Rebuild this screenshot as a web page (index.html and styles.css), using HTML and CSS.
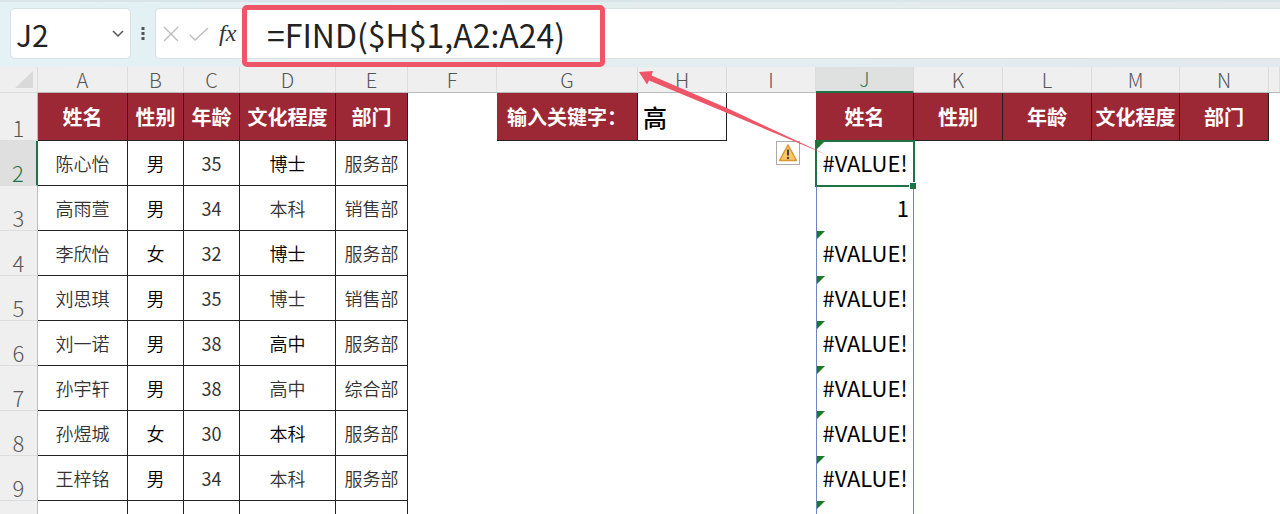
FILE: index.html
```html
<!DOCTYPE html>
<html lang="zh-CN">
<head>
  <meta charset="UTF-8">
  <meta name="viewport" content="width=device-width, initial-scale=1.0">
  <title>FIND</title>
  <link rel="stylesheet" href="styles.css">
</head>
<body>
  <div class="formula-bar">
    <div class="name-box">
      <input class="name-input" type="text" value="J2" aria-label="名称框">
      <button class="name-toggle" aria-label="展开">
        <svg width="14" height="10" viewBox="0 0 14 10"><path d="M2 2l5 5 5-5" fill="none" stroke="#555" stroke-width="1.5"/></svg>
      </button>
    </div>
    <svg class="grip" width="4" height="14" viewBox="0 0 4 14"><path d="M.5 0h3v3h-3zM.5 5h3v3h-3zM.5 10h3v3h-3z" fill="#555"/></svg>
    <div class="formula-tools">
      <button aria-label="取消">
        <svg width="16" height="16" viewBox="0 0 16 16"><path d="M1 1l14 14M15 1L1 15" fill="none" stroke="#bbb" stroke-width="1.3"/></svg>
      </button>
      <button aria-label="输入">
        <svg width="20" height="16" viewBox="0 0 20 16"><path d="M1 9l5 5L19 2" fill="none" stroke="#bbb" stroke-width="1.3"/></svg>
      </button>
      <button class="fx" aria-label="插入函数">fx</button>
    </div>
    <input class="formula-input" type="text" value="=FIND($H$1,A2:A24)" aria-label="编辑栏">
  </div>

  <table class="sheet">
    <colgroup>
      <col class="c-row"><col class="c-a"><col class="c-b"><col class="c-b"><col class="c-d"><col class="c-e">
      <col class="c-std"><col class="c-g"><col class="c-std"><col class="c-std"><col class="c-j">
      <col class="c-std"><col class="c-std"><col class="c-m"><col class="c-std"><col>
    </colgroup>
    <thead>
      <tr>
        <th class="corner"><svg width="20" height="18" viewBox="0 0 20 18"><path d="M19 0v17H1z" fill="#d9d9d9"/></svg></th>
        <th>A</th><th>B</th><th>C</th><th>D</th><th>E</th><th>F</th><th>G</th><th>H</th><th>I</th>
        <th class="active">J</th><th>K</th><th>L</th><th>M</th><th>N</th><th></th>
      </tr>
    </thead>
    <tbody>
      <tr class="row-title">
        <th>1</th>
        <td class="title">姓名</td><td class="title">性别</td><td class="title">年龄</td><td class="title">文化程度</td><td class="title">部门</td>
        <td></td><td class="title">输入关键字：</td><td class="keyword">高</td><td></td>
        <td class="title">姓名</td><td class="title">性别</td><td class="title">年龄</td><td class="title">文化程度</td><td class="title">部门</td><td></td>
      </tr>
      <tr>
        <th class="active">2</th>
        <td class="cell">陈心怡</td><td class="cell dark">男</td><td class="cell num">35</td><td class="cell dark">博士</td><td class="cell">服务部</td>
        <td></td><td></td><td></td>
        <td class="warn-cell">
          <button class="warn" aria-label="错误检查">
            <svg width="20" height="20" viewBox="0 0 20 20"><path d="M10 2L18.500 17.500H1.500z" fill="#fbc568" stroke="#d9982f" stroke-width="1.500" stroke-linejoin="round"/><path d="M10 6.500v6" stroke="#444" stroke-width="2"/><circle cx="10" cy="15" r="1.200" fill="#444"/></svg>
          </button>
        </td>
        <td class="result error selected">#VALUE!</td><td></td><td></td><td></td><td></td><td></td>
      </tr>
      <tr>
        <th>3</th>
        <td class="cell">高雨萱</td><td class="cell dark">男</td><td class="cell num">34</td><td class="cell">本科</td><td class="cell">销售部</td>
        <td></td><td></td><td></td><td></td><td class="result value">1</td><td></td><td></td><td></td><td></td><td></td>
      </tr>
      <tr>
        <th>4</th>
        <td class="cell">李欣怡</td><td class="cell dark">女</td><td class="cell num">32</td><td class="cell dark">博士</td><td class="cell">服务部</td>
        <td></td><td></td><td></td><td></td><td class="result error">#VALUE!</td><td></td><td></td><td></td><td></td><td></td>
      </tr>
      <tr>
        <th>5</th>
        <td class="cell">刘思琪</td><td class="cell dark">男</td><td class="cell num">35</td><td class="cell">博士</td><td class="cell">销售部</td>
        <td></td><td></td><td></td><td></td><td class="result error">#VALUE!</td><td></td><td></td><td></td><td></td><td></td>
      </tr>
      <tr>
        <th>6</th>
        <td class="cell">刘一诺</td><td class="cell dark">男</td><td class="cell num">38</td><td class="cell dark">高中</td><td class="cell">服务部</td>
        <td></td><td></td><td></td><td></td><td class="result error">#VALUE!</td><td></td><td></td><td></td><td></td><td></td>
      </tr>
      <tr>
        <th>7</th>
        <td class="cell">孙宇轩</td><td class="cell dark">男</td><td class="cell num">38</td><td class="cell">高中</td><td class="cell">综合部</td>
        <td></td><td></td><td></td><td></td><td class="result error">#VALUE!</td><td></td><td></td><td></td><td></td><td></td>
      </tr>
      <tr>
        <th>8</th>
        <td class="cell">孙煜城</td><td class="cell dark">女</td><td class="cell num">30</td><td class="cell dark">本科</td><td class="cell">服务部</td>
        <td></td><td></td><td></td><td></td><td class="result error">#VALUE!</td><td></td><td></td><td></td><td></td><td></td>
      </tr>
      <tr>
        <th>9</th>
        <td class="cell">王梓铭</td><td class="cell dark">男</td><td class="cell num">34</td><td class="cell">本科</td><td class="cell">服务部</td>
        <td></td><td></td><td></td><td></td><td class="result error">#VALUE!</td><td></td><td></td><td></td><td></td><td></td>
      </tr>
      <tr>
        <th></th>
        <td class="cell"></td><td class="cell"></td><td class="cell"></td><td class="cell dark">高中</td><td class="cell"></td>
        <td></td><td></td><td></td><td></td><td class="result error"></td><td></td><td></td><td></td><td></td><td></td>
      </tr>
    </tbody>
  </table>

  <!-- callout around the formula, arrow from J2 -->
  <div class="callout"></div>
  <svg class="arrow" width="192" height="86" viewBox="0 0 192 86"><path d="M1 1L15 0 13.500 4.500 90 37.500 189 84 88 41.500 11 9.500 9 13.500z" fill="#ee5566"/></svg>
</body>
</html>
```

FILE: styles.css
```css
* {
  box-sizing: border-box;
}
body {
  margin: 0;
  height: 100vh;
  overflow: hidden;
  position: relative;
  background: #fff;
  color: #222;
  font-family: "Noto Sans CJK SC", sans-serif;
}
button {
  padding: 0;
  border: none;
  background: none;
  display: flex;
  align-items: center;
}
input {
  border: none;
  outline: none;
  background: none;
  min-width: 0;
  padding: 0;
  color: #222;
  font-family: inherit;
}

/* Formula bar */
.formula-bar {
  display: flex;
  align-items: center;
  height: 67px;
  padding: 6px 0 8px 10px;
  background: linear-gradient(to right, #e4f2f5, #e3e9ec);
  border-top: 2px solid #d9e5e9;
}
.name-box {
  display: flex;
  align-items: center;
  width: 121px;
  height: 51px;
  padding: 0 5px;
  background: #fff;
  border: 1px solid #d8e0e2;
  border-radius: 5px;
}
.name-input {
  flex: 1;
  font-size: 30px;
}
.grip {
  margin: 0 10px;
}
.formula-tools {
  display: flex;
  align-items: center;
  gap: 10px;
  width: 87px;
  height: 51px;
  padding-left: 7px;
  background: #fff;
  border: 1px solid #d8e0e2;
  border-right: none;
  border-radius: 5px 0 0 5px;
}
.fx {
  font-family: "Liberation Serif", serif;
  font-style: italic;
  font-size: 24px;
  color: #333;
}
.formula-input {
  flex: 1;
  height: 51px;
  padding-left: 24px;
  background: #fff;
  border: 1px solid #d8e0e2;
  border-right: none;
  font-size: 32px;
}

/* Sheet */
.sheet {
  width: 100%;
  table-layout: fixed;
  border-collapse: separate;
  border-spacing: 0;
}
.c-row { width: 38px; }
.c-a { width: 90px; }
.c-b { width: 56px; }
.c-d { width: 96px; }
.c-e { width: 72px; }
.c-std { width: 89px; }
.c-g { width: 141px; }
.c-j { width: 98px; }
.c-m { width: 88px; }
th,
td {
  padding: 0;
  height: 45px;
  line-height: 24px;
}
th {
  background: #efefef;
  color: #555;
  font-weight: 300;
  font-size: 20px;
}
thead th {
  height: 26px;
  border-right: 1px solid #dcdcdc;
  border-bottom: 1px solid #bbb;
}
thead .corner {
  text-align: right;
  padding-right: 3px;
  line-height: 0;
  border-bottom-color: #ddd;
}
thead .active {
  background: #dfe1e1;
  color: #357a5a;
  border-bottom: 2px solid #1f7246;
}
tbody th {
  vertical-align: bottom;
  padding-bottom: 1px;
  border-right: 1px solid #bbb;
  border-bottom: 1px solid #ddd;
  font-size: 22px;
}
tbody .active {
  background: #dfdfdf;
  color: #1f7246;
  border-right: 2px solid #1f7246;
}
.row-title th,
.row-title td {
  height: 48px;
}
.title,
.cell,
.keyword {
  border-right: 1px solid #222;
  border-bottom: 1px solid #222;
  text-align: center;
}
.title {
  background: #9d2835;
  color: #fff;
  font-weight: bold;
  font-size: 20px;
  white-space: nowrap;
}
.keyword {
  padding-left: 5px;
  text-align: left;
  color: #000;
  font-weight: 500;
  font-size: 24px;
}
.cell {
  padding-bottom: 1px;
  color: #333;
  font-weight: 350;
  font-size: 18px;
}
.cell.dark {
  color: #000;
}
.cell.num {
  font-weight: 400;
}
.result {
  position: relative;
  padding-bottom: 4px;
  border-left: 1px solid #6d86c0;
  border-right: 1px solid #6d86c0;
  text-align: center;
  color: #000;
  font-size: 22px;
}
.result.value {
  text-align: right;
  padding-right: 4px;
}
.error::before {
  content: "";
  position: absolute;
  top: 0;
  left: 0;
  border-top: 8px solid #1a7a2a;
  border-right: 8px solid transparent;
}
.selected {
  outline: 2px solid #1f7246;
  outline-offset: -1px;
}
.selected::after {
  content: "";
  position: absolute;
  right: -3px;
  bottom: -3px;
  width: 6px;
  height: 6px;
  background: #1f7246;
  border: 1px solid #fff;
  border-width: 1px 0 0 1px;
  z-index: 1;
}
.warn-cell {
  position: relative;
}
.warn {
  position: absolute;
  top: 0;
  right: 16px;
  width: 24px;
  height: 24px;
  justify-content: center;
  background: #fff;
  border: 1px solid #aaa;
}

/* Callout */
.callout {
  position: absolute;
  left: 242px;
  top: 5px;
  width: 363px;
  height: 62px;
  border: 5px solid #ee5566;
  border-radius: 5px;
}
.arrow {
  position: absolute;
  left: 638px;
  top: 71px;
  z-index: 2;
}
```
